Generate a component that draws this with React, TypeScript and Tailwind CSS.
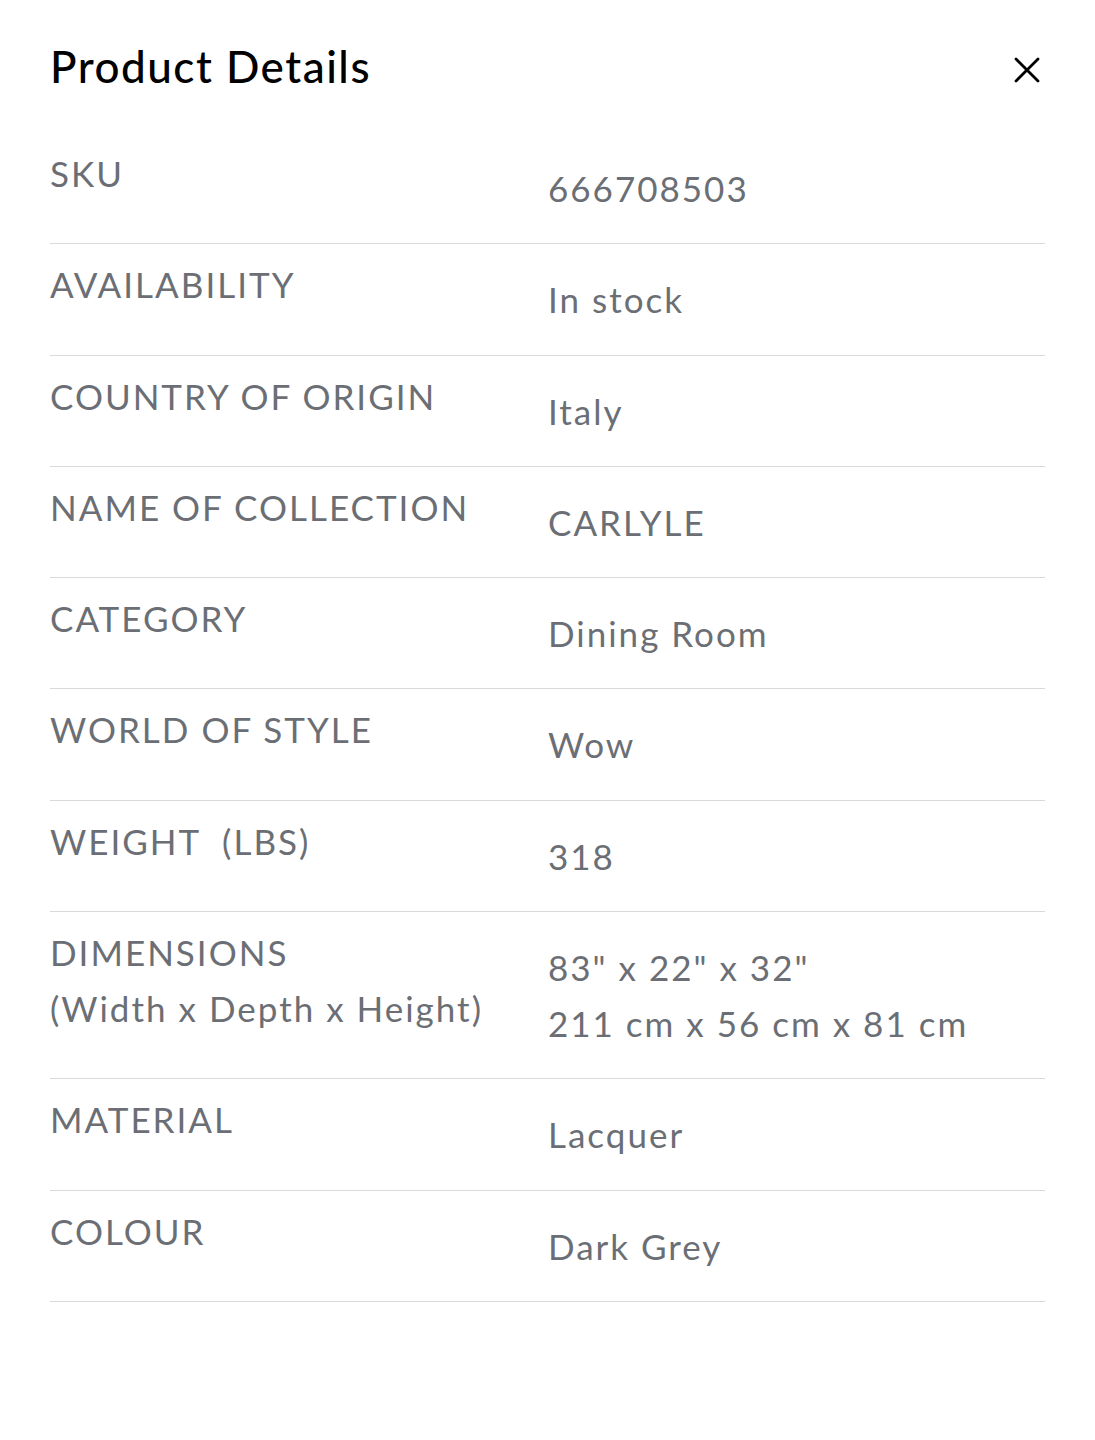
import React from 'react';

const rows: { label: string[]; value: string[] }[] = [
  { label: ['SKU'], value: ['666708503'] },
  { label: ['AVAILABILITY'], value: ['In stock'] },
  { label: ['COUNTRY OF ORIGIN'], value: ['Italy'] },
  { label: ['NAME OF COLLECTION'], value: ['CARLYLE'] },
  { label: ['CATEGORY'], value: ['Dining Room'] },
  { label: ['WORLD OF STYLE'], value: ['Wow'] },
  { label: ['WEIGHT  (LBS)'], value: ['318'] },
  { label: ['DIMENSIONS', '(Width x Depth x Height)'], value: ['83" x 22" x 32"', '211 cm x 56 cm x 81 cm'] },
  { label: ['MATERIAL'], value: ['Lacquer'] },
  { label: ['COLOUR'], value: ['Dark Grey'] },
];

export default function App() {
  return (
    <div className="min-h-[1440px] w-[1095px] bg-white px-[50px] pt-[38px] font-['Lato','Noto_Sans',sans-serif]">
      {/* Header */}
      <div className="flex items-start justify-between">
        <h1 className="text-[44px] leading-[56px] font-medium tracking-[1.5px] text-black">Product Details</h1>
        <button className="mt-[18px] mr-[4px] text-black">
          <svg width="28" height="28" viewBox="0 0 28 28" fill="none" stroke="currentColor" strokeWidth="2.8" strokeLinecap="round">
            <path d="M3 3 L25 25 M25 3 L3 25" />
          </svg>
        </button>
      </div>

      {/* Detail rows */}
      <div className="mt-[39px]">
        {rows.map((row, i) => (
          <div key={i} className="flex text-[35px] leading-[56px] tracking-[2px] text-[#6b6f75] pb-[27.3px] border-b border-[#d9d9d9]">
            <div className="w-[498px] pt-[12px]">
              {row.label.map((l, j) => (
                <div key={j} className="whitespace-pre">{l}</div>
              ))}
            </div>
            <div className="flex-1 pt-[27px]">
              {row.value.map((v, j) => (
                <div key={j}>{v}</div>
              ))}
            </div>
          </div>
        ))}
      </div>
    </div>
  );
}
